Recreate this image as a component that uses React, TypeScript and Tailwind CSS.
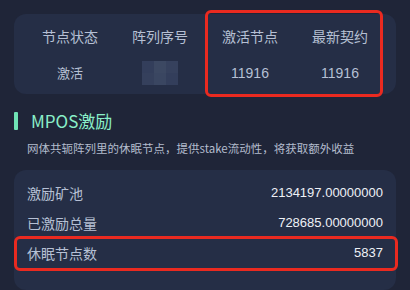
const font = { fontFamily: '"Noto Sans CJK SC", "Noto Sans", sans-serif' };
const num = { fontFamily: '"Liberation Sans", sans-serif' };

const heads = ["节点状态", "阵列序号", "激活节点", "最新契约"];

const rows = [
  { label: "激励矿池", value: "2134197.00000000" },
  { label: "已激励总量", value: "728685.00000000" },
  { label: "休眠节点数", value: "5837" },
];

function Mosaic() {
  return (
    <div className="grid h-[24px] w-[36px] grid-cols-3 grid-rows-2 opacity-70">
      <div className="bg-[#3a4664]" />
      <div className="bg-[#46536f]" />
      <div className="bg-[#3e4a68]" />
      <div className="bg-[#3c4866]" />
      <div className="bg-[#44516d]" />
      <div className="bg-[#3a4664]" />
    </div>
  );
}

export default function App() {
  return (
    <div className="h-[290px] w-[410px] overflow-hidden bg-[#1f2538] px-[14px] pt-[14px]" style={font}>
      <div className="relative rounded-[12px] bg-[#252e46] px-[11px] pb-[9px] pt-[11px]">
        <div className="grid grid-cols-4 text-center text-[14px] text-[#b6c0d4]">
          {heads.map((h) => (
            <div key={h} className="flex h-[22px] items-center justify-center">
              {h}
            </div>
          ))}
        </div>
        <div className="mt-[14px] grid grid-cols-4 text-center text-[13px] text-[#b6c0d4]">
          <div className="flex h-[24px] items-center justify-center">激活</div>
          <div className="flex h-[24px] items-center justify-center">
            <Mosaic />
          </div>
          <div className="flex h-[24px] items-center justify-center text-[14px]" style={num}>
            11916
          </div>
          <div className="flex h-[24px] items-center justify-center text-[14px]" style={num}>
            11916
          </div>
        </div>
        <div className="pointer-events-none absolute left-[191px] top-[-4px] h-[87px] w-[178px] rounded-[6px] border-[3px] border-[#ea2a20]" />
      </div>

      <div className="mt-[17px] flex items-center gap-[13px]">
        <div className="h-[18px] w-[4px] rounded-[1px] bg-[#6fe3b5]" />
        <div className="text-[17px] leading-[20px] text-[#8aefc8]">MPOS激励</div>
      </div>
      <div className="mt-[9px] pl-[13px] text-[11.5px] leading-[16px] text-[#b3bccd]">
        网体共轭阵列里的休眠节点，提供stake流动性，将获取额外收益
      </div>

      <div className="relative mt-[14px] h-[120px] rounded-[12px] bg-[#252e46] px-[13px] pt-[8px]">
        {rows.map((r) => (
          <div key={r.label} className="flex h-[30px] items-center justify-between">
            <span className="text-[14px] text-[#b6c0d4]">{r.label}</span>
            <span className="text-[13px] text-[#eef1f6]" style={num}>
              {r.value}
            </span>
          </div>
        ))}
        <div className="pointer-events-none absolute left-0 top-[66px] h-[35px] w-[384px] rounded-[6px] border-[3px] border-[#ea2a20]" />
      </div>
    </div>
  );
}
